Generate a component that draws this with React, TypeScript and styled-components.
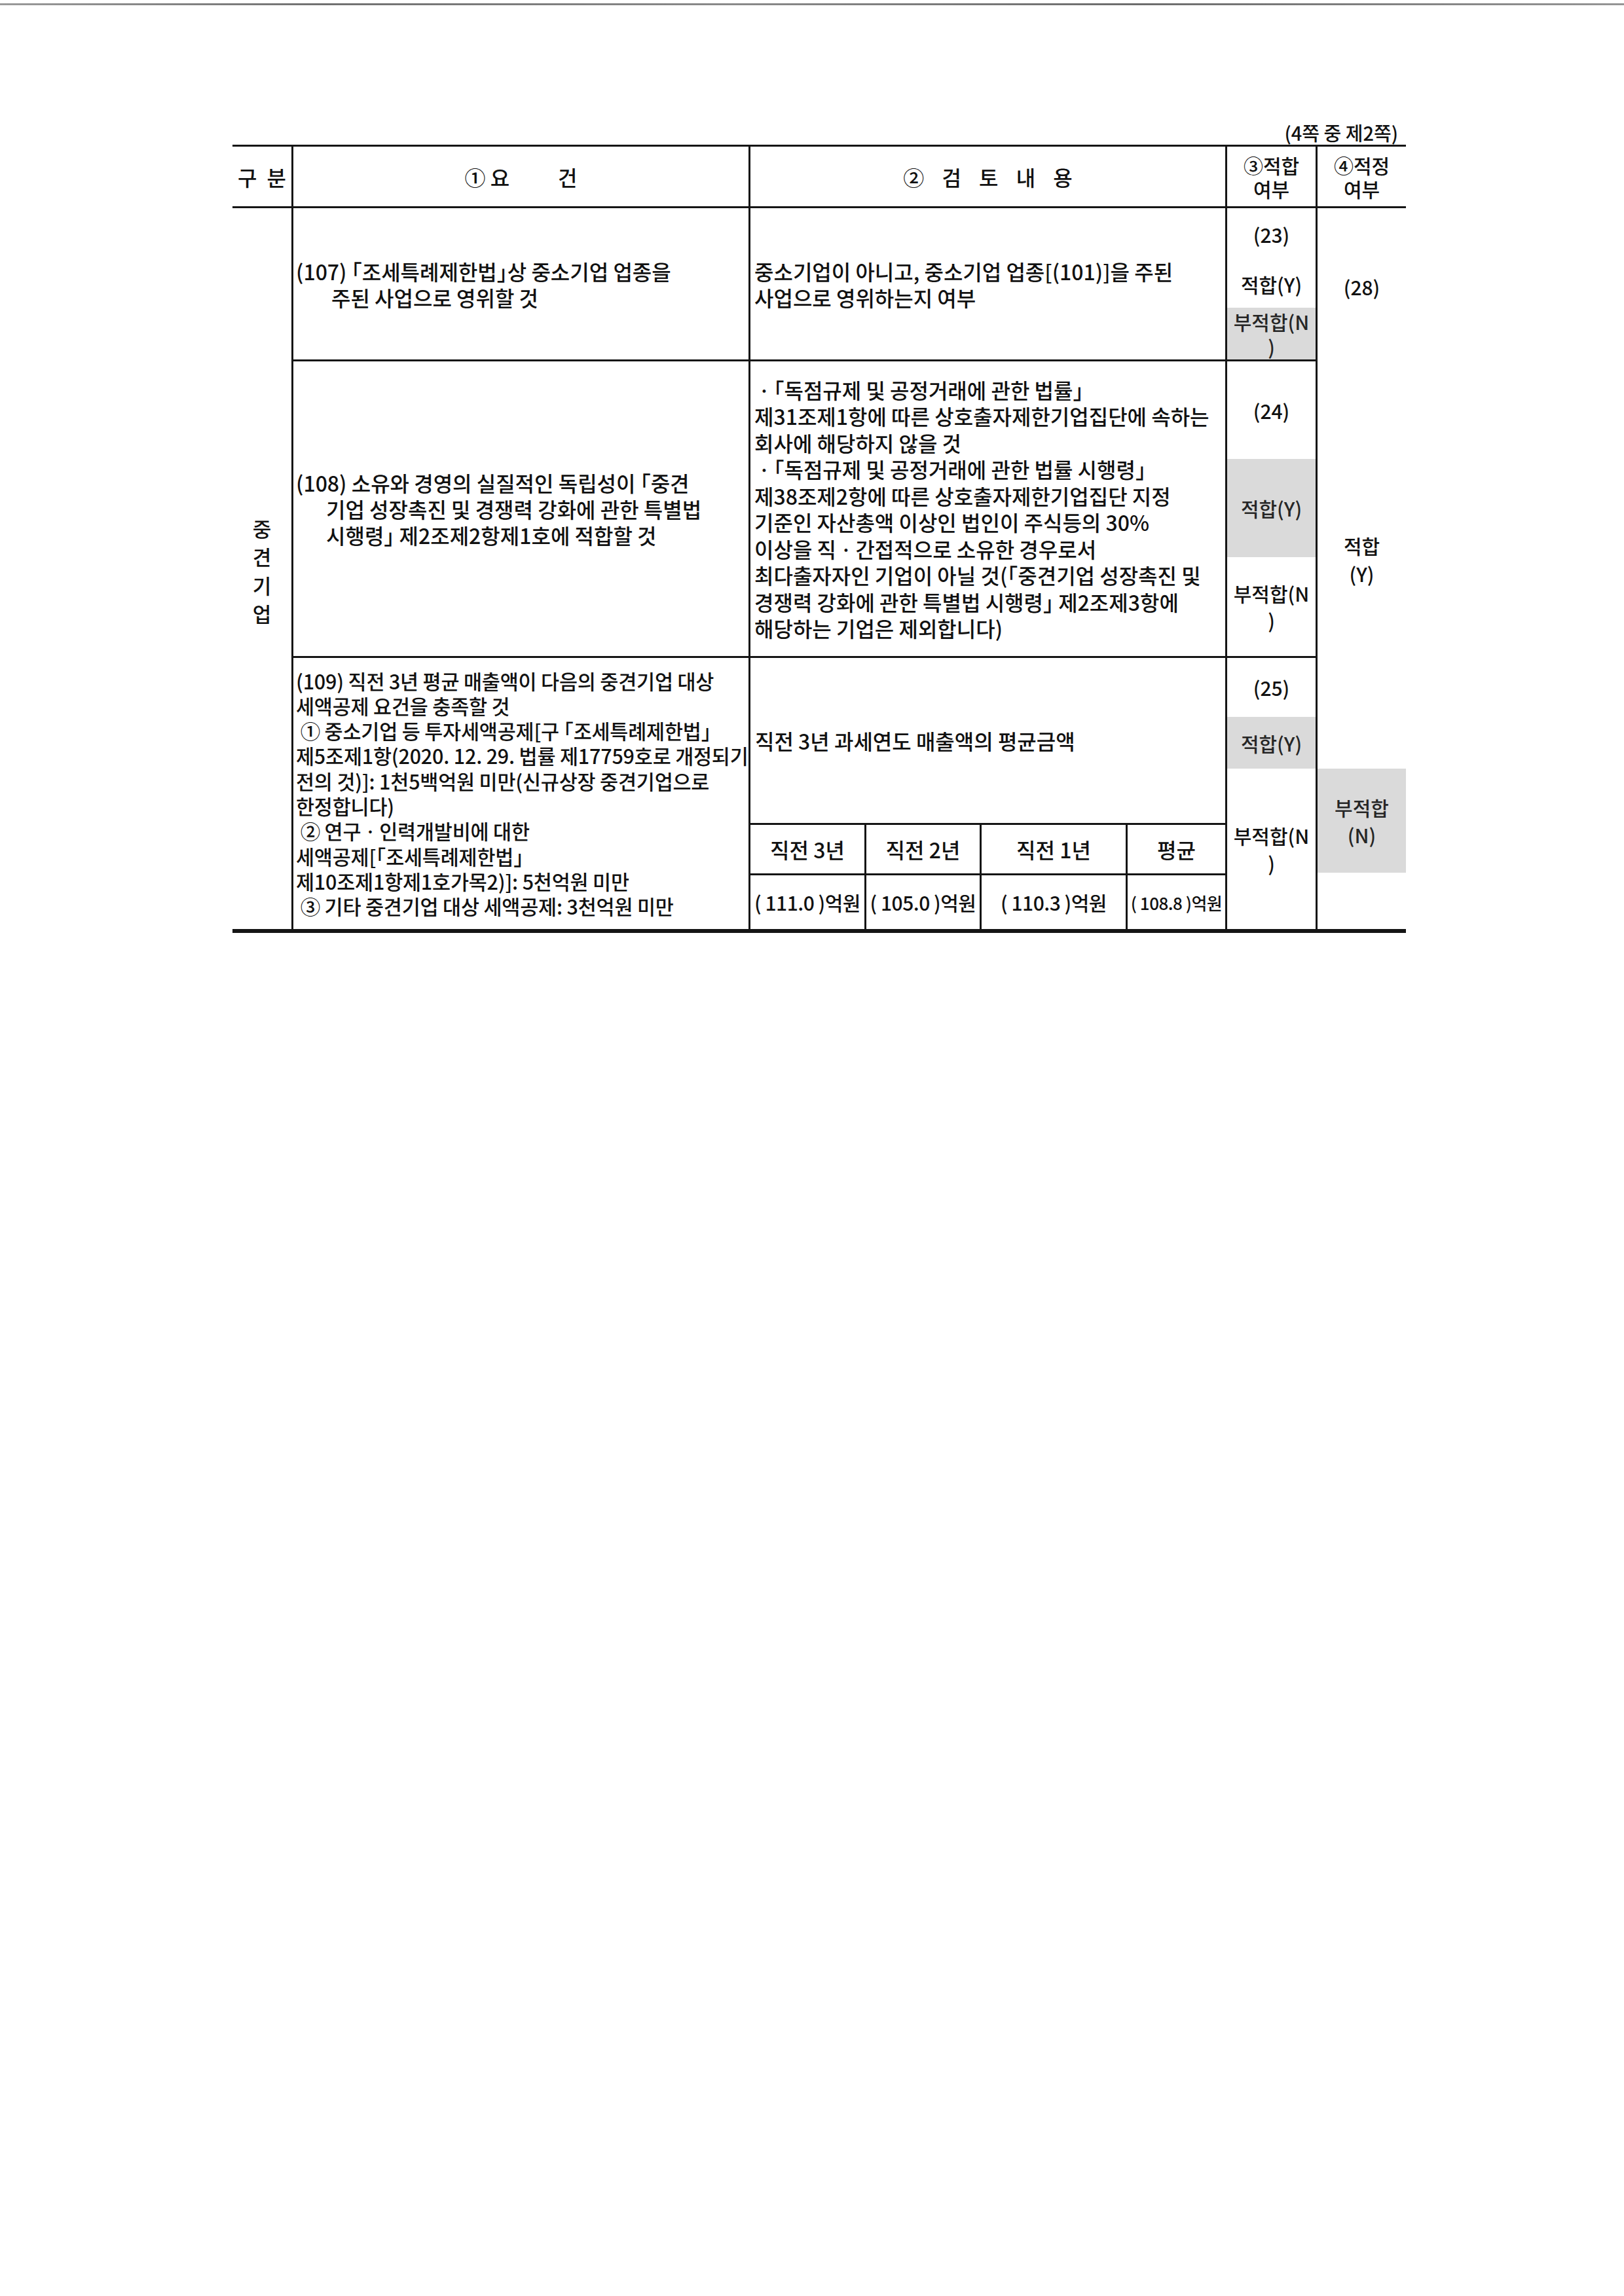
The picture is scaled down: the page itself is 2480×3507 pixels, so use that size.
import React from "react";
import styled, { createGlobalStyle } from "styled-components";

const GlobalStyle = createGlobalStyle`
    html, body {
        margin: 0;
        padding: 0;
        background: #ffffff;
    }
    body {
        font-family: "Noto Sans CJK KR", "Noto Sans", sans-serif;
        font-weight: 500;
        color: #111111;
    }
`;

const LINE = "#151515";
const SHADE = "#dadada";

type Slot = { h: number; text?: string; shade?: boolean; lh?: number };

const reviewRows: Slot[][] = [
    [
        { h: 80, text: "(23)" },
        { h: 72, text: "적합(Y)" },
        { h: 79, text: "부적합(N\n)", shade: true, lh: 38 },
    ],
    [
        { h: 149, text: "(24)" },
        { h: 150, text: "적합(Y)", shade: true },
        { h: 151, text: "부적합(N\n)", lh: 41 },
    ],
    [
        { h: 90, text: "(25)" },
        { h: 79, text: "적합(Y)", shade: true },
        { h: 245, text: "부적합(N\n)", lh: 42 },
    ],
];

const verdictSlots: Slot[] = [
    { h: 240, text: "(28)" },
    { h: 594, text: "적합\n(Y)", lh: 43 },
    { h: 22 },
    { h: 159, text: "부적합\n(N)", shade: true, lh: 42 },
    { h: 86 },
];

const amounts = [
    { label: "직전 3년", value: "( 111.0 )억원" },
    { label: "직전 2년", value: "( 105.0 )억원" },
    { label: "직전 1년", value: "( 110.3 )억원" },
    { label: "평균", value: "( 108.8 )억원", small: true },
];

const SlotStack = ({ slots }: { slots: Slot[] }) => (
    <Stack>
        {slots.map((s, i) => (
            <SlotBox key={i} $h={s.h} $shade={s.shade} $lh={s.lh}>
                {s.text}
            </SlotBox>
        ))}
    </Stack>
);

const App: React.FC = () => {
    return (
        <Page>
            <GlobalStyle />
            <ScanEdge />
            <Sheet>
                <PageNo>(4쪽 중 제2쪽)</PageNo>
                <Table>
                    <HeadCell>
                        <Spaced $word={8}>구 분</Spaced>
                    </HeadCell>
                    <HeadCell>
                        ① 요<Gap />건
                    </HeadCell>
                    <HeadCell>
                        <Spaced $word={20}>② 검 토 내 용</Spaced>
                    </HeadCell>
                    <HeadCell $wide>{"③적합\n여부"}</HeadCell>
                    <HeadCell $wide>{"④적정\n여부"}</HeadCell>

                    <GroupCell $span={3}>
                        <Vertical>{"중\n견\n기\n업"}</Vertical>
                    </GroupCell>

                    {/* (107) */}
                    <TextCell $pad={4}>
                        <Para $lh={40}>
                            <Line>(107) 「조세특례제한법」상 중소기업 업종을</Line>
                            <Line $indent={54}>주된 사업으로 영위할 것</Line>
                        </Para>
                    </TextCell>
                    <TextCell>
                        <Para $lh={40}>
                            <Line>중소기업이 아니고, 중소기업 업종[(101)]을 주된</Line>
                            <Line>사업으로 영위하는지 여부</Line>
                        </Para>
                    </TextCell>
                    <PlainCell>
                        <SlotStack slots={reviewRows[0]} />
                    </PlainCell>
                    <PlainCell $span={3}>
                        <SlotStack slots={verdictSlots} />
                    </PlainCell>

                    {/* (108) */}
                    <TextCell $pad={4}>
                        <Para $lh={40}>
                            <Line>(108) 소유와 경영의 실질적인 독립성이 「중견</Line>
                            <Line $indent={46}>기업 성장촉진 및 경쟁력 강화에 관한 특별법</Line>
                            <Line $indent={46}>시행령」 제2조제2항제1호에 적합할 것</Line>
                        </Para>
                    </TextCell>
                    <TextCell>
                        <Para $lh={40.5}>
                            <Line>ㆍ「독점규제 및 공정거래에 관한 법률」</Line>
                            <Line>제31조제1항에 따른 상호출자제한기업집단에 속하는</Line>
                            <Line>회사에 해당하지 않을 것</Line>
                            <Line>ㆍ「독점규제 및 공정거래에 관한 법률 시행령」</Line>
                            <Line>제38조제2항에 따른 상호출자제한기업집단 지정</Line>
                            <Line>기준인 자산총액 이상인 법인이 주식등의 30%</Line>
                            <Line>이상을 직ㆍ간접적으로 소유한 경우로서</Line>
                            <Line>최다출자자인 기업이 아닐 것(「중견기업 성장촉진 및</Line>
                            <Line>경쟁력 강화에 관한 특별법 시행령」 제2조제3항에</Line>
                            <Line>해당하는 기업은 제외합니다)</Line>
                        </Para>
                    </TextCell>
                    <PlainCell>
                        <SlotStack slots={reviewRows[1]} />
                    </PlainCell>

                    {/* (109) */}
                    <TextCell $pad={4}>
                        <Para $lh={38.3} $size={30.5} $tight>
                            <Line>(109) 직전 3년 평균 매출액이 다음의 중견기업 대상</Line>
                            <Line>세액공제 요건을 충족할 것</Line>
                            <Line> ① 중소기업 등 투자세액공제[구 「조세특례제한법」</Line>
                            <Line>제5조제1항(2020. 12. 29. 법률 제17759호로 개정되기</Line>
                            <Line>전의 것)]: 1천5백억원 미만(신규상장 중견기업으로</Line>
                            <Line>한정합니다)</Line>
                            <Line> ② 연구ㆍ인력개발비에 대한</Line>
                            <Line>세액공제[「조세특례제한법」</Line>
                            <Line>제10조제1항제1호가목2)]: 5천억원 미만</Line>
                            <Line> ③ 기타 중견기업 대상 세액공제: 3천억원 미만</Line>
                        </Para>
                    </TextCell>
                    <SplitCell>
                        <Summary>직전 3년 과세연도 매출액의 평균금액</Summary>
                        <Amounts>
                            {amounts.map((a) => (
                                <AmountCell key={a.label}>{a.label}</AmountCell>
                            ))}
                            {amounts.map((a) => (
                                <AmountCell key={a.value} $value $small={a.small}>
                                    {a.value}
                                </AmountCell>
                            ))}
                        </Amounts>
                    </SplitCell>
                    <PlainCell>
                        <SlotStack slots={reviewRows[2]} />
                    </PlainCell>
                </Table>
            </Sheet>
        </Page>
    );
};

export default App;

const Page = styled.div`
    width: 2480px;
    min-height: 3507px;
    background: #ffffff;
    overflow: hidden;
`;

const ScanEdge = styled.div`
    margin-top: 5px;
    height: 3px;
    background: linear-gradient(
        to right,
        #9a9a9a,
        #707070 20%,
        #8a8a8a 45%,
        #6c6c6c 70%,
        #959595
    );
`;

const Sheet = styled.div`
    width: 1792px;
    margin: 179px 0 0 355px;
`;

const PageNo = styled.div`
    height: 30px;
    margin-bottom: 4px;
    padding-right: 12px;
    text-align: right;
    font-size: 29px;
    line-height: 30px;
`;

const Table = styled.div`
    display: grid;
    grid-template-columns: 90px 695px 725px 135px 135px;
    grid-template-rows: 91px 231px 450px 414px;
    gap: 3px;
    background: ${LINE};
    border-top: 3px solid ${LINE};
    border-bottom: 6px solid ${LINE};
`;

const HeadCell = styled.div<{ $wide?: boolean }>`
    display: flex;
    align-items: center;
    justify-content: center;
    background: #ffffff;
    text-align: center;
    white-space: pre;
    font-size: ${(p) => (p.$wide ? "30px" : "32px")};
    line-height: ${(p) => (p.$wide ? "36px" : "40px")};
`;

const Spaced = styled.span<{ $word: number }>`
    word-spacing: ${(p) => p.$word}px;
`;

const Gap = styled.span`
    display: inline-block;
    width: 74px;
`;

const GroupCell = styled.div<{ $span: number }>`
    grid-row: span ${(p) => p.$span};
    display: flex;
    align-items: center;
    justify-content: center;
    background: #ffffff;
`;

const Vertical = styled.div`
    white-space: pre;
    text-align: center;
    font-size: 31px;
    line-height: 43.5px;
    padding-top: 6px;
`;

const TextCell = styled.div<{ $pad?: number }>`
    display: flex;
    align-items: center;
    padding-left: ${(p) => p.$pad ?? 6}px;
    background: #ffffff;
    overflow: hidden;
`;

const Para = styled.div<{ $lh: number; $size?: number; $tight?: boolean }>`
    font-size: ${(p) => p.$size ?? 32}px;
    line-height: ${(p) => p.$lh}px;
    letter-spacing: ${(p) => (p.$tight ? "-0.2px" : "0")};
    font-feature-settings: "halt";
`;

const Line = styled.div<{ $indent?: number }>`
    padding-left: ${(p) => p.$indent ?? 0}px;
    white-space: pre;
`;

const PlainCell = styled.div<{ $span?: number }>`
    grid-row: span ${(p) => p.$span ?? 1};
    background: #ffffff;
`;

const Stack = styled.div`
    display: flex;
    flex-direction: column;
    height: 100%;
`;

const SlotBox = styled.div<{ $h: number; $shade?: boolean; $lh?: number }>`
    height: ${(p) => p.$h}px;
    flex-shrink: 0;
    display: flex;
    align-items: center;
    justify-content: center;
    text-align: center;
    white-space: pre;
    background: ${(p) => (p.$shade ? SHADE : "#ffffff")};
    color: ${(p) => (p.$shade ? "#262626" : "#111111")};
    font-size: 30px;
    line-height: ${(p) => p.$lh ?? 40}px;
`;

const SplitCell = styled.div`
    display: flex;
    flex-direction: column;
    background: #ffffff;
`;

const Summary = styled.div`
    flex: 1;
    display: flex;
    align-items: center;
    padding-left: 7px;
    font-size: 32px;
`;

const Amounts = styled.div`
    display: grid;
    grid-template-columns: 174px 173px 220px 149px;
    grid-template-rows: 74px 82px;
    gap: 3px;
    background: ${LINE};
    border-top: 3px solid ${LINE};
`;

const AmountCell = styled.div<{ $value?: boolean; $small?: boolean }>`
    display: flex;
    align-items: center;
    justify-content: center;
    background: #ffffff;
    white-space: pre;
    font-size: ${(p) => (p.$small ? "26px" : p.$value ? "30px" : "32px")};
    letter-spacing: ${(p) => (p.$value ? "-0.5px" : "0")};
`;
